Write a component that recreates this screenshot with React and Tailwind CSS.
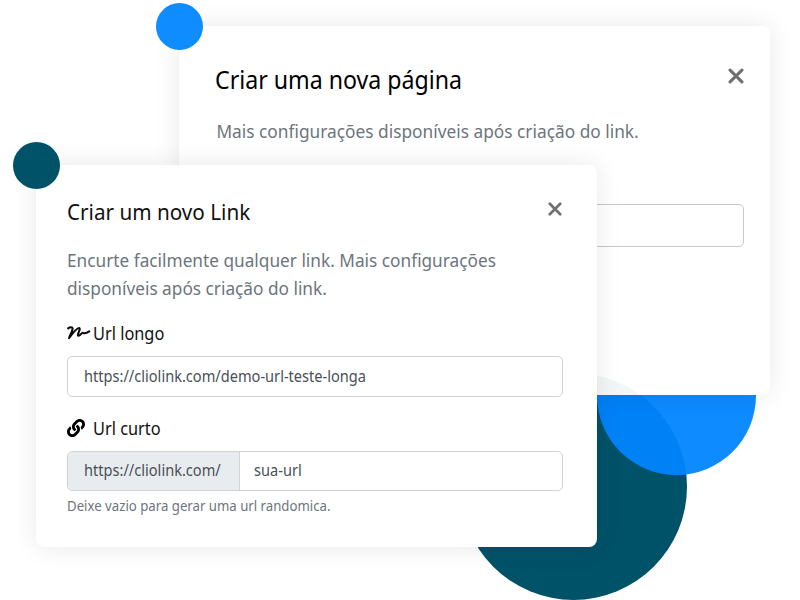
import { FaLink } from "react-icons/fa";

function CloseIcon({ className }) {
  return (
    <svg viewBox="0 0 14 14" className={className} fill="none" stroke="#707070" strokeWidth="2.7" strokeLinecap="round">
      <path d="M1.8 1.8 12.2 12.2M12.2 1.8 1.8 12.2" />
    </svg>
  );
}

function SquiggleIcon() {
  return (
    <svg viewBox="0 0 24 16" className="h-4 w-6" fill="none" stroke="#0a0a0a" strokeWidth="2.1" strokeLinecap="round" strokeLinejoin="round">
      <path d="M1.2 3.4C2.8 2 5.4 1.8 5.6 3.4C5.6 6 3 10 2 13.2C5 9 9.8 2.8 12.2 3C14.2 3.6 9.4 10.4 11.4 10.8C13.4 11 14.4 7.4 16 7.8C17.4 8.8 19.4 8.4 22.2 6.4" />
    </svg>
  );
}

function PageCard() {
  return (
    <section className="absolute left-[179px] top-[26px] flex h-[369px] w-[591px] flex-col rounded-lg bg-white/95 pr-[26px] shadow-[0_0_26px_rgba(0,0,0,0.09)]">
      <header className="flex justify-between pl-9 pt-[35px]">
        <h2 className="origin-left scale-x-[0.908] whitespace-nowrap text-[25.5px] leading-9 text-black">Criar uma nova página</h2>
        <CloseIcon className="mt-[7px] h-4 w-4" />
      </header>
      <p className="mt-5 origin-left scale-x-[0.935] self-start whitespace-nowrap pl-10 text-[18.5px] leading-7 text-[#6c757d]">
        Mais configurações disponíveis após criação do link.
      </p>
      <div className="ml-9 mt-[59px] h-[43px] rounded-[5px] border border-[#c8c8c8]" />
    </section>
  );
}

function LinkCard() {
  return (
    <section className="absolute left-[36px] top-[165px] flex h-[382px] w-[561px] flex-col rounded-lg bg-white pl-[31px] pr-[34px] shadow-[0_0_26px_rgba(0,0,0,0.09)]">
      <header className="flex justify-between pt-[30px]">
        <h2 className="origin-left scale-x-[0.94] whitespace-nowrap text-[22px] leading-8 text-[#111]">Criar um novo Link</h2>
        <CloseIcon className="mr-px mt-[7px] h-[14px] w-[14px]" />
      </header>
      <p className="mt-[19px] origin-left scale-x-[0.932] whitespace-nowrap text-[18.5px] leading-[27.5px] text-[#6c757d]">
        Encurte facilmente qualquer link. Mais configurações
        <br />
        disponíveis após criação do link.
      </p>
      <div className="mt-5 flex h-6 items-center">
        <SquiggleIcon />
        <span className="ml-[2px] origin-left scale-x-[0.934] text-[17.5px] text-[#111]">Url longo</span>
      </div>
      <div className="mt-[11px] flex h-[41px] shrink-0 items-center rounded-[5px] border border-[#ced4da] pl-[15.5px] text-[15.5px] text-[#495057]">
        <span className="origin-left scale-x-[0.941]">https://cliolink.com/demo-url-teste-longa</span>
      </div>
      <div className="mt-[19px] flex h-6 items-center">
        <FaLink className="h-[18px] w-[18px] text-black" />
        <span className="ml-2 origin-left scale-x-[0.934] text-[17.5px] text-[#111]">Url curto</span>
      </div>
      <div className="mt-[11px] flex h-10 shrink-0 overflow-hidden rounded-[5px] border border-[#ced4da] text-[15.5px] text-[#495057]">
        <div className="flex w-[172px] shrink-0 items-center border-r border-[#ced4da] bg-[#e9ecef] pl-[15.5px]">
          <span className="origin-left scale-x-[0.941]">https://cliolink.com/</span>
        </div>
        <div className="flex items-center pl-[14px]">
          <span className="origin-left scale-x-[0.941]">sua-url</span>
        </div>
      </div>
      <p className="mt-[5px] origin-left scale-x-[0.943] whitespace-nowrap text-[14px] leading-5 text-[#6c757d]">
        Deixe vazio para gerar uma url randomica.
      </p>
    </section>
  );
}

export default function App() {
  return (
    <main className="relative h-[600px] w-[800px] overflow-hidden bg-white font-['Noto_Sans',sans-serif]">
      <div className="absolute left-[460px] top-[373px] h-[227px] w-[227px] rounded-full bg-[#005269]" />
      <div className="absolute left-[597px] top-[395px] h-[80px] w-[159px] rounded-b-full bg-[#0085ff]/95" />
      <PageCard />
      <LinkCard />
      <div className="absolute left-[156px] top-[3px] h-[47px] w-[47px] rounded-full bg-[#0f8cff]" />
      <div className="absolute left-[13px] top-[142px] h-[47px] w-[47px] rounded-full bg-[#005269]" />
    </main>
  );
}
